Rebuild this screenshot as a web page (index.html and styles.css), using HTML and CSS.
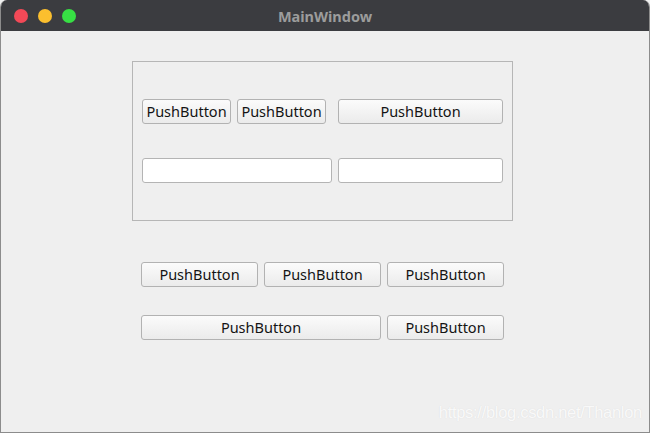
FILE: index.html
```html
<!DOCTYPE html>
<html>
<head>
<meta charset="utf-8">
<title>MainWindow</title>
<link rel="stylesheet" href="styles.css">
</head>
<body>
<div class="window">
	<div class="titlebar">
		<div class="lights">
			<span class="light red"></span>
			<span class="light yellow"></span>
			<span class="light green"></span>
		</div>
		<div class="title">MainWindow</div>
	</div>
	<div class="central">
		<div class="frame">
			<div class="row">
				<button class="btn w89">PushButton</button>
				<button class="btn w89 ml6">PushButton</button>
				<button class="btn w165 ml12">PushButton</button>
			</div>
			<div class="row row-edit">
				<input class="edit w190" type="text">
				<input class="edit w165 ml6" type="text">
			</div>
		</div>
		<div class="lower">
			<div class="row">
				<button class="btn w117">PushButton</button>
				<button class="btn w117 ml6">PushButton</button>
				<button class="btn w117 ml6">PushButton</button>
			</div>
			<div class="row row-last">
				<button class="btn w240">PushButton</button>
				<button class="btn w117 ml6">PushButton</button>
			</div>
		</div>
		<div class="mark">https://blog.csdn.net/Thanlon</div>
	</div>
</div>
</body>
</html>
```
FILE: styles.css
```css
* {padding:0; margin:0; box-sizing:border-box;}
body {width:650px; height:433px; background:#f0f0f0; overflow:hidden; font-family:"Noto Sans", "DejaVu Sans", sans-serif;}

.window {width:650px; height:433px; border:1px solid #8c8c8c; border-top:none; border-radius:7px 7px 0 0; background:#efefef; display:flex; flex-direction:column; overflow:hidden;}
.titlebar {height:31px; background:#3b3c40; position:relative; display:flex; align-items:center; justify-content:center; margin:0 -1px;}
.lights {position:absolute; left:14px; top:9px; display:flex; gap:10px;}
.light {width:14px; height:14px; border-radius:50%; display:block;}
.red {background:#f24957;}
.yellow {background:#fbbf2e;}
.green {background:#37df44;}
.title {color:#9c9c9c; font-weight:bold; font-size:14.5px;}

.central {flex:1; position:relative; padding:30px 0 0 131px;}

.frame {width:381px; height:160px; border:1px solid #b6b6b6; padding:37px 0 0 9px;}
.row {display:flex;}
.row-edit {margin-top:34px;}

.btn {height:25px; border:1px solid #b2b2b2; border-radius:3px; background:linear-gradient(#fbfbfb, #ebebeb); font-family:inherit; font-size:14.5px; color:#141414; line-height:21px;}
.edit {height:25px; border:1px solid #b4b4b4; border-radius:3px; background:#fff;}

.w89 {width:89px;}
.w117 {width:117px;}
.w165 {width:165px;}
.w190 {width:190px;}
.w240 {width:240px;}
.ml6 {margin-left:6px;}
.ml12 {margin-left:12px;}

.lower {margin:41px 0 0 9px;}
.row-last {margin-top:28px;}

.mark {position:absolute; right:7px; bottom:10px; font-family:"Liberation Sans", Arial, sans-serif; font-size:16.5px; letter-spacing:-0.3px; color:rgba(255,255,255,0.85); text-shadow:0 0 1px #d8d8d8;}
```
